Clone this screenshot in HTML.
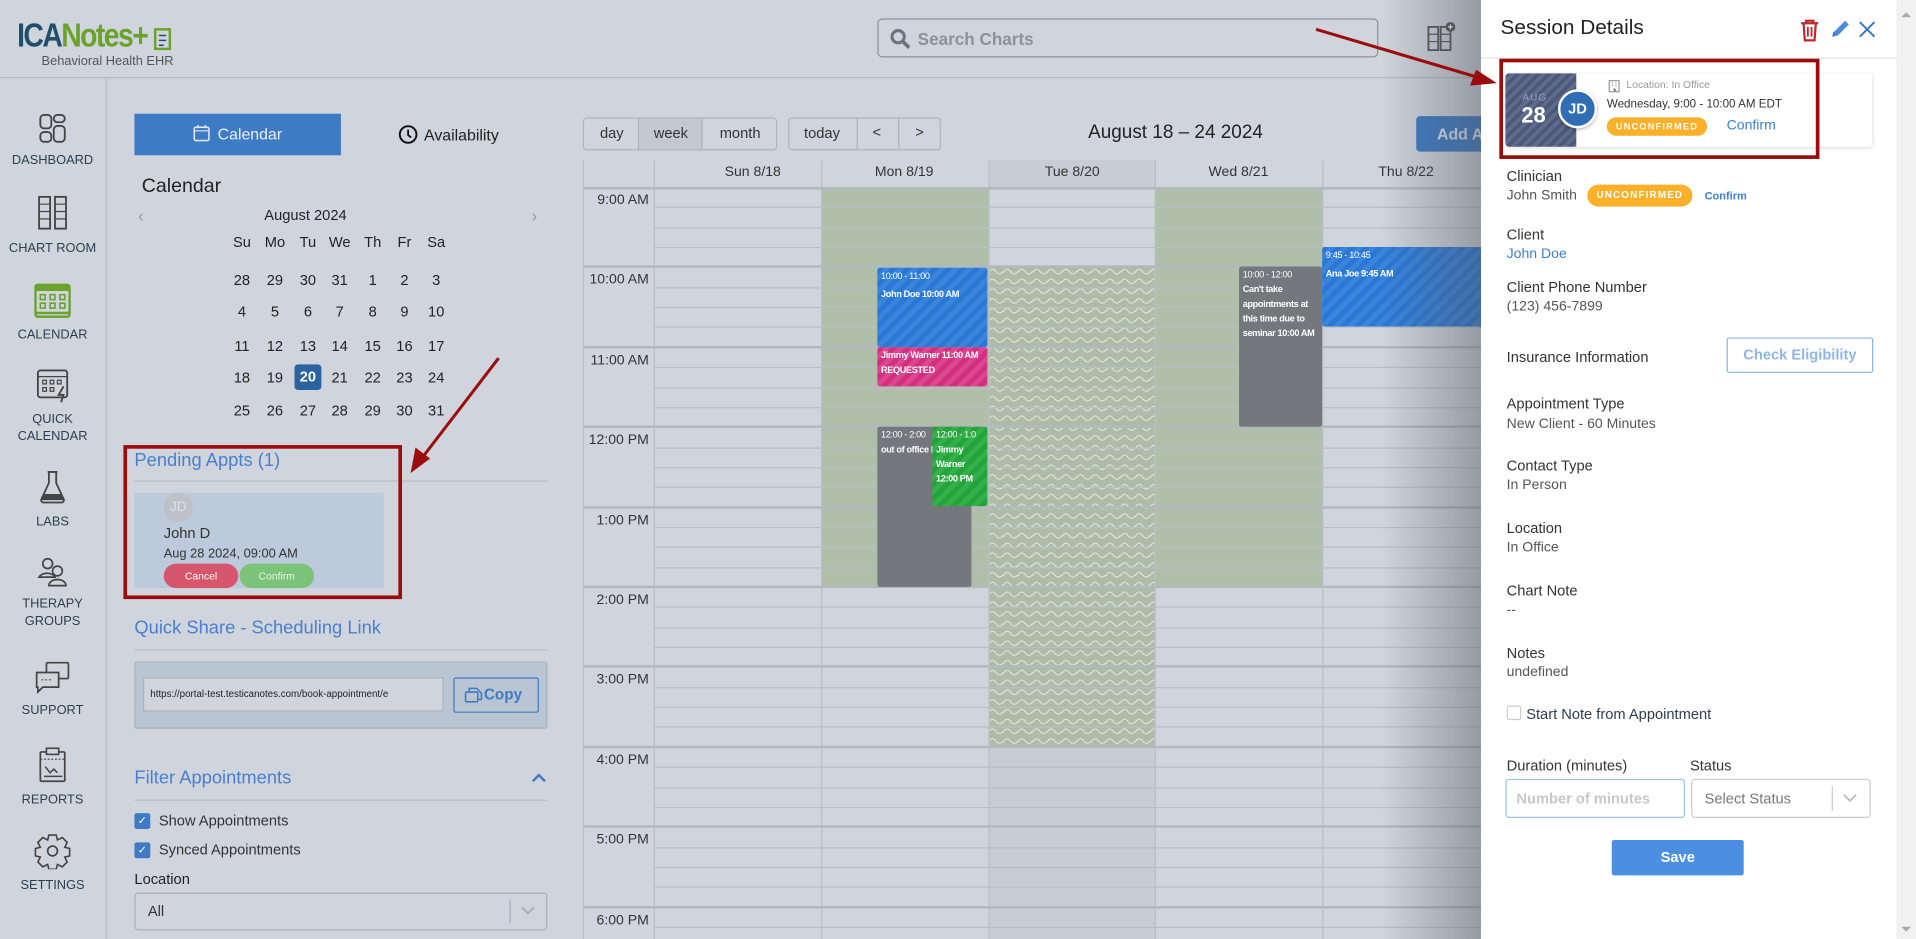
<!DOCTYPE html>
<html><head><meta charset="utf-8">
<style>
html,body{margin:0;padding:0;width:1916px;height:939px;overflow:hidden;background:#d0d5dd;}
#w{position:absolute;left:0;top:0;width:1568px;height:768px;transform:scale(1.22194,1.22266);transform-origin:0 0;font-family:"Liberation Sans",sans-serif;color:#333;background:#d0d5dd;overflow:hidden}
.a{position:absolute}
.nav{position:absolute;left:0;width:86px;text-align:center;font-size:10.5px;color:#2c3e50;line-height:14px}
.nav svg{display:block;margin:0 auto 6px}
.cd{position:absolute;font-size:12px;color:#222;width:20px;text-align:center}
.hl{position:absolute;left:535px;width:677px;height:1px;background:#b9bec6}
.hh{position:absolute;left:477px;width:735px;height:2px;background:#b3b8c0}
.vl{position:absolute;top:131px;width:1px;height:637px;background:#b9bec6}
.tm{position:absolute;left:477px;width:54px;text-align:right;font-size:11.5px;color:#333}
.ev{position:absolute;color:#fff;font-size:7.5px;line-height:12px;padding:1px 3px;box-sizing:border-box;overflow:hidden;border-radius:2px;letter-spacing:-0.3px}
.lbl{position:absolute;left:1233px;font-size:12px;color:#333}
.val{position:absolute;left:1233px;font-size:11.5px;color:#555}
</style></head><body><div id="w">
<!-- header -->
<div class="a" style="left:0;top:63px;width:1212px;height:1px;background:#b4b9c1"></div>
<div class="a" style="left:86px;top:64px;width:2px;height:704px;background:#c3c8cf"></div>
<div class="a" style="left:14px;top:14px;font-size:27px;font-weight:bold;letter-spacing:-1.5px;line-height:30px;transform:scaleX(0.86);transform-origin:0 0;white-space:nowrap"><span style="color:#1e4f6b">ICA</span><span style="color:#6aa22c">Notes+</span></div>
<svg class="a" style="left:124px;top:22px" width="18" height="22"><rect x="3" y="2" width="12" height="16" fill="none" stroke="#6aa22c" stroke-width="2"/><path d="M6 7h6M6 11h6M6 15h4" stroke="#1e4f6b" stroke-width="1.2"/></svg>
<div class="a" style="left:34px;top:44px;font-size:10.5px;color:#555">Behavioral Health EHR</div>
<div class="a" style="left:718px;top:15px;width:410px;height:32px;border:1px solid #8c939c;border-radius:4px;box-sizing:border-box"></div>
<svg class="a" style="left:728px;top:23px" width="18" height="18"><circle cx="7" cy="7" r="5" fill="none" stroke="#6b7480" stroke-width="2.5"/><path d="M11 11l5 5" stroke="#6b7480" stroke-width="3"/></svg>
<div class="a" style="left:751px;top:24px;font-size:14px;color:#8b929b;font-weight:bold">Search Charts</div>
<svg class="a" style="left:1168px;top:17px" width="24" height="26"><rect x="1" y="5" width="8" height="19" fill="none" stroke="#555" stroke-width="1.5"/><rect x="11" y="5" width="8" height="19" fill="none" stroke="#555" stroke-width="1.5"/><path d="M1 11h8M1 17h8M11 11h8M11 17h8" stroke="#555"/><circle cx="19" cy="5" r="4" fill="#555"/><path d="M17 5h4M19 3v4" stroke="#fff"/></svg>
<!-- sidebar -->
<div class="nav" style="top:92px"><svg width="24" height="26"><rect x="2" y="2" width="9" height="11" rx="3" fill="none" stroke="#444" stroke-width="1.5"/><rect x="13" y="2" width="9" height="6" rx="3" fill="none" stroke="#444" stroke-width="1.5"/><rect x="2" y="16" width="9" height="8" rx="3" fill="none" stroke="#444" stroke-width="1.5"/><rect x="13" y="11" width="9" height="13" rx="3" fill="none" stroke="#444" stroke-width="1.5"/></svg>DASHBOARD</div>
<div class="nav" style="top:160px"><svg width="26" height="30"><rect x="2" y="1" width="9" height="26" fill="none" stroke="#444" stroke-width="1.5"/><rect x="15" y="1" width="9" height="26" fill="none" stroke="#444" stroke-width="1.5"/><path d="M2 7h9M2 13h9M2 19h9M15 7h9M15 13h9M15 19h9" stroke="#444"/></svg>CHART ROOM</div>
<div class="nav" style="top:231px"><svg width="30" height="30"><rect x="1" y="2" width="28" height="26" rx="2" fill="none" stroke="#6aa22c" stroke-width="2"/><rect x="1" y="2" width="28" height="5" fill="#6aa22c"/><g fill="none" stroke="#6aa22c" stroke-width="1.3"><rect x="5" y="10" width="4" height="4"/><rect x="13" y="10" width="4" height="4"/><rect x="21" y="10" width="4" height="4"/><rect x="5" y="17" width="4" height="4"/><rect x="13" y="17" width="4" height="4"/><rect x="21" y="17" width="4" height="4"/></g><path d="M1 25h28" stroke="#6aa22c" stroke-width="2"/></svg>CALENDAR</div>
<div class="nav" style="top:300px"><svg width="30" height="30"><rect x="3" y="3" width="24" height="22" rx="2" fill="none" stroke="#444" stroke-width="1.5"/><path d="M3 8h24" stroke="#444"/><g fill="none" stroke="#444"><rect x="7" y="11" width="3" height="3"/><rect x="13" y="11" width="3" height="3"/><rect x="19" y="11" width="3" height="3"/><rect x="7" y="17" width="3" height="3"/><rect x="13" y="17" width="3" height="3"/></g><path d="M24 16l-4 7h4l-2 6" stroke="#444" fill="none" stroke-width="1.5"/></svg>QUICK<br>CALENDAR</div>
<div class="nav" style="top:384px"><svg width="24" height="30"><path d="M8 2h8M9 2v9L3 24a2 2 0 0 0 2 3h14a2 2 0 0 0 2-3L15 11V2" fill="none" stroke="#444" stroke-width="1.5"/><path d="M5 20h14l2 5H3z" fill="#444"/></svg>LABS</div>
<div class="nav" style="top:455px"><svg width="26" height="26"><circle cx="9" cy="6" r="4" fill="none" stroke="#444" stroke-width="1.4"/><path d="M2 17a7 5 0 0 1 13 0z" fill="none" stroke="#444" stroke-width="1.4"/><circle cx="17" cy="12" r="4" fill="none" stroke="#444" stroke-width="1.4"/><path d="M10 24a7 5 0 0 1 14 0z" fill="none" stroke="#444" stroke-width="1.4"/></svg>THERAPY<br>GROUPS</div>
<div class="nav" style="top:540px"><svg width="30" height="28"><rect x="10" y="2" width="18" height="13" rx="1" fill="none" stroke="#444" stroke-width="1.4"/><path d="M2 10h18v12H7l-4 4v-4H2z" fill="#d0d5dd" stroke="#444" stroke-width="1.4"/><path d="M6 16h8" stroke="#444" stroke-dasharray="1.5 1.5"/></svg>SUPPORT</div>
<div class="nav" style="top:611px"><svg width="26" height="30"><rect x="3" y="4" width="20" height="24" rx="1" fill="none" stroke="#444" stroke-width="1.4"/><rect x="8" y="1" width="10" height="5" fill="#d0d5dd" stroke="#444" stroke-width="1.3"/><path d="M3 10h20" stroke="#444" stroke-dasharray="1.5 1.5"/><path d="M6 24h15M7 16l4 5 3-3 3 3" fill="none" stroke="#444" stroke-width="1.2"/></svg>REPORTS</div>
<div class="nav" style="top:681px"><svg width="30" height="30"><path d="M12 2h6l1 4 4-2 4 4-2 4 4 1v6l-4 1 2 4-4 4-4-2-1 4h-6l-1-4-4 2-4-4 2-4-4-1v-6l4-1-2-4 4-4 4 2z" fill="none" stroke="#444" stroke-width="1.3"/><circle cx="15" cy="15" r="4" fill="none" stroke="#444" stroke-width="1.4"/></svg>SETTINGS</div>
<!-- left panel -->
<div class="a" style="left:110px;top:93px;width:169px;height:34px;background:#3f7bc4;color:#e8eef8;font-size:13px;line-height:34px;text-align:center"><svg width="14" height="14" style="vertical-align:-2px;margin-right:6px"><rect x="1" y="2" width="12" height="11" rx="1.5" fill="none" stroke="#dfe7f3" stroke-width="1.3"/><path d="M1 5h12M4 0v3M10 0v3" stroke="#dfe7f3"/></svg>Calendar</div>
<svg class="a" style="left:326px;top:102px" width="16" height="16"><circle cx="8" cy="8" r="6.8" fill="none" stroke="#111" stroke-width="1.6"/><path d="M8 4v4.5l2.5 2" fill="none" stroke="#111" stroke-width="1.5"/></svg>
<div class="a" style="left:347px;top:103px;font-size:13px;color:#222">Availability</div>
<div class="a" style="left:116px;top:144px;font-size:16px;color:#222">Calendar</div>
<div class="a" style="left:113px;top:168px;font-size:14px;color:#999">‹</div>
<div class="a" style="left:435px;top:168px;font-size:14px;color:#999">›</div>
<div class="a" style="left:200px;top:169px;width:100px;text-align:center;font-size:12px;color:#222">August 2024</div>
<div id="cal"></div>
<!-- pending -->
<div class="a" style="left:110px;top:368px;font-size:15px;color:#4a7fcf">Pending Appts (1)</div>
<div class="a" style="left:110px;top:393px;width:338px;height:1px;background:#b8bdc5"></div>
<div class="a" style="left:110px;top:403px;width:204px;height:78px;background:#bccadb"></div>
<div class="a" style="left:134px;top:403px;width:24px;height:24px;border-radius:50%;background:#bec2c8;color:#dde;font-size:11px;line-height:24px;text-align:center">JD</div>
<div class="a" style="left:134px;top:429px;font-size:12px;color:#333">John D</div>
<div class="a" style="left:134px;top:447px;font-size:10.5px;color:#333">Aug 28 2024, 09:00 AM</div>
<div class="a" style="left:134px;top:461px;width:61px;height:20px;border-radius:10px;background:#d6566d;color:#fff;font-size:8.5px;line-height:20px;text-align:center">Cancel</div>
<div class="a" style="left:196px;top:461px;width:61px;height:20px;border-radius:10px;background:#7cc37a;color:#e6f5e6;font-size:8.5px;line-height:20px;text-align:center">Confirm</div>
<div class="a" style="left:101px;top:364px;width:228px;height:126px;border:3px solid #9b0d0d;box-sizing:border-box"></div>
<div class="a" style="left:110px;top:505px;font-size:15px;color:#4a7fcf">Quick Share - Scheduling Link</div>
<div class="a" style="left:110px;top:531px;width:338px;height:1px;background:#b8bdc5"></div>
<div class="a" style="left:110px;top:541px;width:338px;height:55px;background:#bac5d4;border:1px solid #a9b1bd;box-sizing:border-box;border-radius:2px"></div>
<div class="a" style="left:117px;top:554px;width:246px;height:28px;background:#d0d5dd;border:1px solid #aab1ba;box-sizing:border-box;font-size:8px;line-height:26px;padding-left:5px;overflow:hidden;white-space:nowrap;color:#222">https://portal-test.testicanotes.com/book-appointment/e</div>
<div class="a" style="left:371px;top:554px;width:70px;height:29px;border:1px solid #3f7bc4;box-sizing:border-box;border-radius:2px;color:#3f7bc4;font-size:12.5px;font-weight:bold;line-height:27px;padding-left:8px"><svg width="16" height="13" style="vertical-align:-3px"><rect x="1" y="4" width="10" height="8" rx="1" fill="none" stroke="#3f7bc4" stroke-width="1.3"/><path d="M4 4V1h6l4 4v5h-3" fill="none" stroke="#3f7bc4" stroke-width="1.3"/></svg>Copy</div>
<div class="a" style="left:110px;top:628px;font-size:15px;color:#4a7fcf">Filter Appointments</div>
<svg class="a" style="left:435px;top:632px" width="12" height="8"><path d="M1 7l5-5 5 5" fill="none" stroke="#3f7bc4" stroke-width="2"/></svg>
<div class="a" style="left:110px;top:654px;width:338px;height:1px;background:#b8bdc5"></div>
<div class="a" style="left:110px;top:665px;width:13px;height:13px;background:#3f7bc4;border-radius:2px;color:#fff;font-size:9px;line-height:13px;text-align:center">✓</div>
<div class="a" style="left:130px;top:664px;font-size:12px;color:#333">Show Appointments</div>
<div class="a" style="left:110px;top:689px;width:13px;height:13px;background:#3f7bc4;border-radius:2px;color:#fff;font-size:9px;line-height:13px;text-align:center">✓</div>
<div class="a" style="left:130px;top:688px;font-size:12px;color:#333">Synced Appointments</div>
<div class="a" style="left:110px;top:712px;font-size:12px;color:#222">Location</div>
<div class="a" style="left:110px;top:730px;width:338px;height:31px;border:1px solid #a9b0b9;border-radius:3px;box-sizing:border-box;font-size:12px;line-height:29px;padding-left:10px;color:#333">All</div>
<div class="a" style="left:417px;top:736px;width:1px;height:19px;background:#aab"></div>
<svg class="a" style="left:426px;top:741px" width="12" height="8"><path d="M1 1l5 5 5-5" fill="none" stroke="#aab" stroke-width="1.5"/></svg>
<!-- toolbar -->
<div class="a" style="left:477px;top:96px;width:159px;height:27px;border:1px solid #aeb4bc;border-radius:3px;box-sizing:border-box"></div>
<div class="a" style="left:522px;top:96px;width:53px;height:27px;background:#c4c9d1;border:1px solid #aeb4bc;box-sizing:border-box"></div>
<div class="a" style="left:491px;top:102px;font-size:12px">day</div>
<div class="a" style="left:535px;top:102px;font-size:12px">week</div>
<div class="a" style="left:589px;top:102px;font-size:12px">month</div>
<div class="a" style="left:645px;top:96px;width:125px;height:27px;border:1px solid #aeb4bc;border-radius:3px;box-sizing:border-box"></div>
<div class="a" style="left:701px;top:96px;width:1px;height:27px;background:#aeb4bc"></div>
<div class="a" style="left:735px;top:96px;width:1px;height:27px;background:#aeb4bc"></div>
<div class="a" style="left:658px;top:102px;font-size:12px">today</div>
<div class="a" style="left:714px;top:101px;font-size:12px">&lt;</div>
<div class="a" style="left:749px;top:101px;font-size:12px">&gt;</div>
<div class="a" style="left:862px;top:100px;width:200px;text-align:center;font-size:15.5px;color:#222">August 18 – 24 2024</div>
<div class="a" style="left:1159px;top:95px;width:80px;height:29px;background:#3f7bc4;border-radius:3px;color:#dce6f4;font-size:13px;font-weight:bold;line-height:29px;padding-left:17px">Add A</div>
<!-- grid -->
<div class="a" style="left:477px;top:131px;width:735px;height:637px;border-left:1px solid #b9bec6;background:#d0d5dd"></div>
<div class="a" style="left:809px;top:131px;width:136px;height:22px;background:#c8ccd4"></div>
<div class="a" style="left:809px;top:611px;width:136px;height:157px;background:#c8ccd4"></div>
<div class="a" style="left:672px;top:153px;width:137px;height:327px;background:#afbfaa"></div>
<div class="a" style="left:945px;top:153px;width:137px;height:327px;background:#afbfaa"></div>
<svg class="a" style="left:809px;top:218px" width="136" height="393"><defs><pattern id="wv" width="12" height="8" patternUnits="userSpaceOnUse"><path d="M0 5Q3 0 6 4T12 4" fill="none" stroke="#dfe6da" stroke-width="0.9"/></pattern></defs><rect width="136" height="393" fill="#aebba8"/><rect width="136" height="393" fill="url(#wv)"/></svg>
<div id="grid"></div>
<div class="a" style="left:477px;top:153px;width:735px;height:2px;background:#b3b8c0"></div>
<div class="a" style="left:593px;top:135px;font-size:11.5px">Sun 8/18</div>
<div class="a" style="left:716px;top:135px;font-size:11.5px">Mon 8/19</div>
<div class="a" style="left:855px;top:135px;font-size:11.5px">Tue 8/20</div>
<div class="a" style="left:989px;top:135px;font-size:11.5px">Wed 8/21</div>
<div class="a" style="left:1128px;top:135px;font-size:11.5px">Thu 8/22</div>
<!-- events -->
<div class="ev" style="left:718px;top:219px;width:90px;height:65px;background:repeating-linear-gradient(135deg,#2a78d6 0 4px,#3a84dc 4px 8px)">10:00 - 11:00<br><b style="line-height:18px">John Doe 10:00 AM</b></div>
<div class="ev" style="left:718px;top:284px;width:90px;height:32px;background:repeating-linear-gradient(135deg,#d2307f 0 4px,#dc4590 4px 8px);font-weight:bold;white-space:nowrap">Jimmy Warner 11:00 AM<br>REQUESTED</div>
<div class="ev" style="left:718px;top:349px;width:77px;height:131px;background:#74777c">12:00 - 2:00<br><b>out of office PM</b></div>
<div class="ev" style="left:763px;top:349px;width:45px;height:65px;background:repeating-linear-gradient(135deg,#23a33a 0 4px,#33b04a 4px 8px)">12:00 - 1:0<br><b>Jimmy Warner 12:00 PM</b></div>
<div class="ev" style="left:1014px;top:218px;width:68px;height:131px;background:#74777c">10:00 - 12:00<br><b>Can't take appointments at this time due to seminar 10:00 AM</b></div>
<div class="ev" style="left:1082px;top:202px;width:140px;height:65px;background:repeating-linear-gradient(135deg,#2a78d6 0 4px,#3a84dc 4px 8px)">9:45 - 10:45<br><b style="line-height:18px">Ana Joe 9:45 AM</b></div>
<!-- shadow -->
<div class="a" style="left:1130px;top:0;width:82px;height:768px;background:linear-gradient(90deg,rgba(80,85,95,0),rgba(80,85,95,.45))"></div>
<!-- panel -->
<div class="a" style="left:1212px;top:0;width:340px;height:768px;background:#fff"></div>
<div class="a" style="left:1552px;top:0;width:16px;height:768px;background:#f1f1f1"></div>
<div class="a" style="left:1556px;top:6px;width:0;height:0;border:4px solid transparent;border-bottom-color:#aaa"></div>
<div class="a" style="left:1556px;top:758px;width:0;height:0;border:4px solid transparent;border-top-color:#aaa"></div>
<div class="a" style="left:1228px;top:13px;font-size:17px;color:#222">Session Details</div>
<svg class="a" style="left:1472px;top:15px" width="18" height="20"><path d="M2 4h14M6 4V2h6v2M4 4l1 14h8l1-14" fill="none" stroke="#c0282d" stroke-width="1.8"/><path d="M7.5 7v8M10.5 7v8" stroke="#c0282d" stroke-width="1.5"/></svg>
<svg class="a" style="left:1497px;top:15px" width="18" height="18"><path d="M3 15l1-4 9-9 3 3-9 9z" fill="#4a8ad8"/><path d="M3 15l1-4" stroke="#2f6db5"/></svg>
<svg class="a" style="left:1520px;top:16px" width="16" height="16"><path d="M2 2l12 12M14 2L2 14" stroke="#3a75c0" stroke-width="1.6"/></svg>
<div class="a" style="left:1212px;top:47px;width:340px;height:1px;background:#e3e3e3"></div>
<div class="a" style="left:1232px;top:60px;width:300px;height:60px;background:#fff;box-shadow:0 1px 4px rgba(0,0,0,.15);border-radius:3px"></div>
<div class="a" style="left:1232px;top:60px;width:58px;height:60px;background:repeating-linear-gradient(135deg,#4b5878 0 3px,#5e6b8a 3px 6px);border-radius:3px 0 0 3px"></div>
<div class="a" style="left:1246px;top:75px;font-size:8px;color:#9aa3b8;letter-spacing:1px">AUG</div>
<div class="a" style="left:1245px;top:84px;font-size:18px;color:#fff;font-weight:bold">28</div>
<div class="a" style="left:1275px;top:73px;width:32px;height:32px;border-radius:50%;background:#2f6db5;border:2px solid #fff;box-sizing:border-box;box-shadow:0 1px 3px rgba(0,0,0,.3);color:#fff;font-size:12px;font-weight:bold;line-height:28px;text-align:center">JD</div>
<svg class="a" style="left:1316px;top:65px" width="10" height="11"><rect x="1" y="1" width="8" height="9" fill="none" stroke="#999"/><path d="M3 3h1M6 3h1M3 5h1M6 5h1M4 8h2v2" stroke="#999"/></svg>
<div class="a" style="left:1331px;top:64px;font-size:8.5px;color:#999">Location: In Office</div>
<div class="a" style="left:1315px;top:80px;font-size:9.5px;color:#333">Wednesday, 9:00 - 10:00 AM EDT</div>
<div class="a" style="left:1315px;top:96px;width:82px;height:15px;border-radius:8px;background:#fbb02a;color:#fff;font-size:7.5px;font-weight:bold;letter-spacing:1px;line-height:15px;text-align:center">UNCONFIRMED</div>
<div class="a" style="left:1413px;top:97px;font-size:11.5px;color:#3a80d8">Confirm</div>
<div class="a" style="left:1227px;top:48px;width:262px;height:82px;border:3px solid #9b0d0d;box-sizing:border-box"></div>
<div class="lbl" style="top:137px">Clinician</div>
<div class="val" style="top:154px">John Smith</div>
<div class="a" style="left:1299px;top:151px;width:86px;height:18px;border-radius:9px;background:#fbb02a;color:#fff;font-size:8px;font-weight:bold;letter-spacing:1px;line-height:18px;text-align:center">UNCONFIRMED</div>
<div class="a" style="left:1395px;top:155px;font-size:9px;color:#3a80d8;font-weight:bold">Confirm</div>
<div class="lbl" style="top:185px">Client</div>
<div class="val" style="top:202px;color:#3a80d8">John Doe</div>
<div class="lbl" style="top:228px">Client Phone Number</div>
<div class="val" style="top:245px">(123) 456-7899</div>
<div class="lbl" style="top:285px">Insurance Information</div>
<div class="a" style="left:1413px;top:276px;width:120px;height:29px;border:1px solid #8fb5e6;border-radius:2px;box-sizing:border-box;color:#8fb5e6;font-size:12px;font-weight:bold;line-height:27px;text-align:center">Check Eligibility</div>
<div class="lbl" style="top:323px">Appointment Type</div>
<div class="val" style="top:341px">New Client - 60 Minutes</div>
<div class="lbl" style="top:374px">Contact Type</div>
<div class="val" style="top:391px">In Person</div>
<div class="lbl" style="top:425px">Location</div>
<div class="val" style="top:442px">In Office</div>
<div class="lbl" style="top:476px">Chart Note</div>
<div class="val" style="top:493px">--</div>
<div class="lbl" style="top:527px">Notes</div>
<div class="val" style="top:544px">undefined</div>
<div class="a" style="left:1233px;top:577px;width:12px;height:12px;border:1px solid #ccc;border-radius:2px;box-sizing:border-box"></div>
<div class="a" style="left:1249px;top:577px;font-size:12px;color:#2c3e50">Start Note from Appointment</div>
<div class="lbl" style="top:619px">Duration (minutes)</div>
<div class="lbl" style="top:619px;left:1383px">Status</div>
<div class="a" style="left:1232px;top:637px;width:147px;height:32px;border:1px solid #9cc0ee;border-radius:3px;box-sizing:border-box;color:#c8c8c8;font-size:12px;line-height:30px;padding-left:8px;font-weight:bold">Number of minutes</div>
<div class="a" style="left:1384px;top:637px;width:147px;height:32px;border:1px solid #ccc;border-radius:3px;box-sizing:border-box;color:#777;font-size:12px;line-height:30px;padding-left:10px">Select Status</div>
<div class="a" style="left:1499px;top:643px;width:1px;height:20px;background:#ccc"></div>
<svg class="a" style="left:1508px;top:649px" width="12" height="8"><path d="M1 1l5 5 5-5" fill="none" stroke="#bbb" stroke-width="1.5"/></svg>
<div class="a" style="left:1319px;top:687px;width:108px;height:29px;background:#4a8fe0;border-radius:2px;color:#fff;font-size:12px;font-weight:bold;line-height:29px;text-align:center">Save</div>
<!-- arrows -->
<svg class="a" style="left:0;top:0" width="1568" height="768"><g stroke="#9b0d0d" stroke-width="2.5"><line x1="1077" y1="24" x2="1212" y2="64"/><line x1="408" y1="293" x2="345" y2="375"/></g><polygon points="1225,68 1203,70 1208,57" fill="#9b0d0d"/><polygon points="336,387 340,366 352,375" fill="#9b0d0d"/></svg>
</div>
<script>
var c=document.getElementById('cal'),h='';
var xs=[198,225,252,278,305,331,357],hd=['Su','Mo','Tu','We','Th','Fr','Sa'];
for(var i=0;i<7;i++)h+='<div class="cd" style="left:'+(xs[i]-10)+'px;top:191px">'+hd[i]+'</div>';
var d=[28,29,30,31];for(var k=1;k<=31;k++)d.push(k);
var ys=[222,248,276,302,329];
for(var r=0;r<5;r++)for(i=0;i<7;i++){var v=d[r*7+i];var s='left:'+(xs[i]-10)+'px;top:'+ys[r]+'px';
if(v==20&&r==3)h+='<div class="cd" style="left:'+(xs[i]-11)+'px;top:'+(ys[r]-4)+'px;width:22px;height:21px;background:#2a63a0;border-radius:3px;color:#fff;font-weight:bold;line-height:21px">20</div>';
else h+='<div class="cd" style="'+s+'">'+v+'</div>';}
c.innerHTML=h;
var g=document.getElementById('grid'),o='';
var times=['9:00 AM','10:00 AM','11:00 AM','12:00 PM','1:00 PM','2:00 PM','3:00 PM','4:00 PM','5:00 PM','6:00 PM'];
for(var t=0;t<10;t++){var y=153+t*65.4;
if(t>0)o+='<div class="hh" style="top:'+(y-1)+'px"></div>';
o+='<div class="tm" style="top:'+(y+5)+'px">'+times[t]+'</div>';
for(var q=1;q<4;q++)o+='<div class="hl" style="top:'+(y+q*16.35)+'px"></div>';}
[535,672,809,945,1082].forEach(function(x){o+='<div class="vl" style="left:'+x+'px"></div>';});
g.innerHTML=o;
</script>
</body></html>
